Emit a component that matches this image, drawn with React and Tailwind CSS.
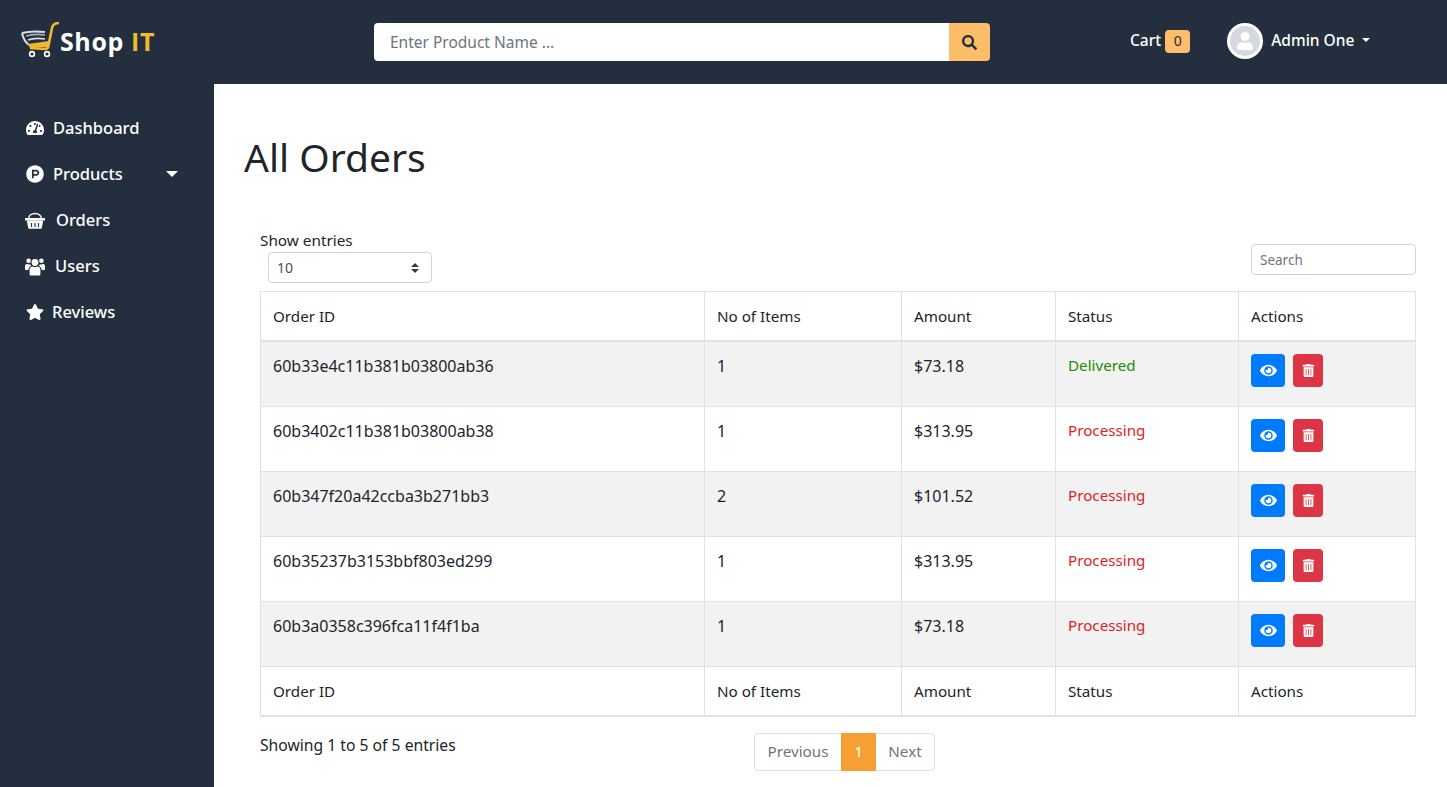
import { FaTachometerAlt, FaProductHunt, FaStar, FaEye, FaTrashAlt, FaSearch, FaUser } from "react-icons/fa";

const orders = [
  { id: "60b33e4c11b381b03800ab36", items: 1, amount: "$73.18", status: "Delivered" },
  { id: "60b3402c11b381b03800ab38", items: 1, amount: "$313.95", status: "Processing" },
  { id: "60b347f20a42ccba3b271bb3", items: 2, amount: "$101.52", status: "Processing" },
  { id: "60b35237b3153bbf803ed299", items: 1, amount: "$313.95", status: "Processing" },
  { id: "60b3a0358c396fca11f4f1ba", items: 1, amount: "$73.18", status: "Processing" },
];

function Logo() {
  return (
    <svg width="40" height="36" viewBox="0 0 40 36" fill="none">
      <path d="M1 11 C8 9 15 9 24 10" stroke="#d9dde0" strokeWidth="2" />
      <path d="M1 11 C2 16 4 20 8 23" stroke="#d9dde0" strokeWidth="2" />
      <path d="M5 14 C11 12 17 12 24 13" stroke="#aab0b6" strokeWidth="1.6" />
      <path d="M7 18 C12 16 18 16 24 17" stroke="#d9dde0" strokeWidth="1.6" />
      <path d="M38 1 C34 1 32 2 31 6 L28 21 C27.5 25 27 27 24 27 L9 26" stroke="#f0b92f" strokeWidth="2.6" />
      <path d="M7 22 L28 19 L27 25 L9 26 Z" fill="#f0b92f" />
      <circle cx="11" cy="32" r="2.4" stroke="#fff" strokeWidth="1.6" />
      <circle cx="26" cy="32" r="2.4" stroke="#fff" strokeWidth="1.6" />
    </svg>
  );
}

function BasketIcon() {
  return (
    <svg width="20" height="18" viewBox="0 0 20 18" fill="none">
      <path d="M3.5 8 C3.5 0.5 16.5 0.5 16.5 8" stroke="#fff" strokeWidth="1.5" />
      <rect x="0" y="7" width="20" height="2.6" rx="0.6" fill="#fff" />
      <path d="M1.8 9.6 H18.2 L16.8 17 a1 1 0 0 1 -1 0.8 H4.2 a1 1 0 0 1 -1 -0.8 Z" fill="#fff" />
      <path d="M6.5 12 V16 M10 12 V16 M13.5 12 V16" stroke="#232f3e" strokeWidth="1.1" />
    </svg>
  );
}

function UsersIcon() {
  return (
    <svg width="20" height="19" viewBox="0 0 20 19" fill="#fff">
      <circle cx="10" cy="5.5" r="3.4" />
      <circle cx="3.6" cy="3.8" r="2.3" />
      <circle cx="16.4" cy="3.8" r="2.3" />
      <path d="M4.6 13 C4.6 10.5 6.3 9.6 7.6 9.6 C8.5 10.3 11.5 10.3 12.4 9.6 C13.7 9.6 15.4 10.5 15.4 13 V17 C15.4 18 14.8 18.6 14 18.6 H6 C5.2 18.6 4.6 18 4.6 17 Z" />
      <path d="M0 9.5 C0 7.5 1 7 2 7 C3 7.6 4 7.6 5.2 7.2 C5.3 8 5.7 8.5 6.2 9 C4.5 9.6 3.6 11 3.4 13 H1 C0.4 13 0 12.6 0 12 Z" />
      <path d="M20 9.5 C20 7.5 19 7 18 7 C17 7.6 16 7.6 14.8 7.2 C14.7 8 14.3 8.5 13.8 9 C15.5 9.6 16.4 11 16.6 13 H19 C19.6 13 20 12.6 20 12 Z" />
    </svg>
  );
}

function Caret({ className }) {
  return <span className={`inline-block border-x-transparent border-t-white ${className}`} />;
}

function Header() {
  return (
    <header className="flex h-[84px] items-center bg-[#232f3e]">
      <div className="flex w-[374px] shrink-0 items-center pl-[21px]">
        <div className="-mt-1">
          <Logo />
        </div>
        <span className="ml-[-1px] font-['Open_Sans',sans-serif] text-[25px] font-bold tracking-[0.6px] text-white">
          Shop <span className="text-[#f0b92f]">IT</span>
        </span>
      </div>
      <div className="flex h-[38px] w-[616px] shrink-0">
        <input
          className="h-full flex-1 rounded-l bg-white px-4 text-[15.5px] text-[#495057] outline-none placeholder:text-[#6c757d]"
          placeholder="Enter Product Name ..."
        />
        <button className="flex w-[41px] items-center justify-center rounded-r bg-[#febd69] text-[#232f3e]">
          <FaSearch size={15} />
        </button>
      </div>
      <div className="ml-[140px] -mt-[2px] flex items-center text-[15.5px] font-medium text-white">
        <span>Cart</span>
        <span className="ml-1 flex h-[23px] w-[25px] items-center justify-center rounded-sm bg-[#febd69] text-sm font-normal text-[#232f3e]">0</span>
      </div>
      <div className="ml-[37px] -mt-[2px] flex items-center text-[15.5px] font-medium text-white">
        <div className="flex h-9 w-9 items-center justify-center overflow-hidden rounded-full border-[3px] border-white bg-[#d5d8dc]">
          <FaUser size={18} className="text-white" />
        </div>
        <span className="ml-2">Admin One</span>
        <Caret className="ml-2 -mt-[2px] border-x-[4px] border-t-[4px]" />
      </div>
    </header>
  );
}

function SideItem({ icon, label, gap, caret }) {
  return (
    <div className="flex h-[46px] items-center pl-[25px] text-[16.5px] font-medium text-white">
      <span className="flex w-5 justify-center">{icon}</span>
      <span className={gap}>{label}</span>
      {caret && <Caret className="ml-[43px] border-x-[6px] border-t-[6px]" />}
    </div>
  );
}

function Sidebar() {
  return (
    <aside className="w-[214px] shrink-0 bg-[#232f3e] pt-[21px]">
      <SideItem icon={<FaTachometerAlt size={18} />} label="Dashboard" gap="ml-[8px]" />
      <SideItem icon={<FaProductHunt size={18} />} label="Products" gap="ml-[8px]" caret />
      <SideItem icon={<BasketIcon />} label="Orders" gap="ml-[11px]" />
      <SideItem icon={<UsersIcon />} label="Users" gap="ml-[10px]" />
      <SideItem icon={<FaStar size={18} />} label="Reviews" gap="ml-[7px]" />
    </aside>
  );
}

function HeadRow() {
  const cell = "h-[49px] border border-b-2 border-[#dee2e6] px-3 pt-[2px] text-left text-[15.2px] font-normal";
  return (
    <tr>
      <th className={cell}>Order ID</th>
      <th className={cell}>No of Items</th>
      <th className={cell}>Amount</th>
      <th className={cell}>Status</th>
      <th className={cell}>Actions</th>
    </tr>
  );
}

function OrderRow({ order, striped, first }) {
  const cell = "border border-[#dee2e6] px-3 pt-3 align-top";
  return (
    <tr className={`${first ? "h-[66px]" : "h-[65px]"} ${striped ? "bg-[#f2f2f2]" : "bg-white"}`}>
      <td className={cell}>{order.id}</td>
      <td className={cell}>{order.items}</td>
      <td className={cell}>{order.amount}</td>
      <td className={`${cell} text-[15.2px] ${order.status === "Delivered" ? "text-[#228b00]" : "text-[#e0221f]"}`}>{order.status}</td>
      <td className={cell}>
        <div className="flex gap-2">
          <button className="flex h-[33px] w-[34px] items-center justify-center rounded bg-[#007bff] text-white">
            <FaEye size={17} />
          </button>
          <button className="flex h-[33px] w-[30px] items-center justify-center rounded bg-[#dc3545] text-white">
            <FaTrashAlt size={13} />
          </button>
        </div>
      </td>
    </tr>
  );
}

export default function App() {
  return (
    <div className="flex h-[787px] flex-col overflow-hidden font-['Noto_Sans',sans-serif] text-base text-[#212529]">
      <Header />
      <div className="flex flex-1">
        <Sidebar />
        <main className="flex-1 bg-white pl-[30px] pr-[31px]">
          <h1 className="mt-[44px] text-[39px] leading-[57px]">All Orders</h1>
          <div className="mt-[43px] pl-4">
            <div className="flex items-end justify-between pb-2">
              <div>
                <div className="text-[15.3px] leading-[24px]">Show entries</div>
                <div className="ml-2 flex h-[31px] w-[164px] items-center justify-between rounded border border-[#ced4da] pl-2 pr-3 text-sm text-[#495057]">
                  10
                  <span className="flex flex-col gap-[2px]">
                    <span className="border-x-[4px] border-b-[4px] border-x-transparent border-b-[#343a40]" />
                    <span className="border-x-[4px] border-t-[4px] border-x-transparent border-t-[#343a40]" />
                  </span>
                </div>
              </div>
              <input
                className="mb-2 h-[31px] w-[165px] rounded-sm border border-[#ced4da] px-2 text-[13.5px] outline-none placeholder:text-[#6c757d]"
                placeholder="Search"
              />
            </div>
            <table className="w-[1155px] table-fixed border-collapse">
              <colgroup>
                <col className="w-[444px]" />
                <col className="w-[197px]" />
                <col className="w-[154px]" />
                <col className="w-[183px]" />
                <col className="w-[177px]" />
              </colgroup>
              <thead>
                <HeadRow />
              </thead>
              <tbody>
                {orders.map((order, i) => (
                  <OrderRow key={order.id} order={order} striped={i % 2 === 0} first={i === 0} />
                ))}
              </tbody>
              <tfoot>
                <HeadRow />
              </tfoot>
            </table>
            <div className="flex items-start pt-[16px]">
              <div className="w-[494px] pt-px text-[15.7px]">Showing 1 to 5 of 5 entries</div>
              <div className="flex h-[38px] rounded border border-[#dee2e6] text-[15.2px] text-[#6c757d]">
                <span className="flex w-[86px] items-center justify-center">Previous</span>
                <span className="-my-px flex w-[35px] items-center justify-center bg-[#f69f32] text-white">1</span>
                <span className="flex w-[58px] items-center justify-center">Next</span>
              </div>
            </div>
          </div>
        </main>
      </div>
    </div>
  );
}
